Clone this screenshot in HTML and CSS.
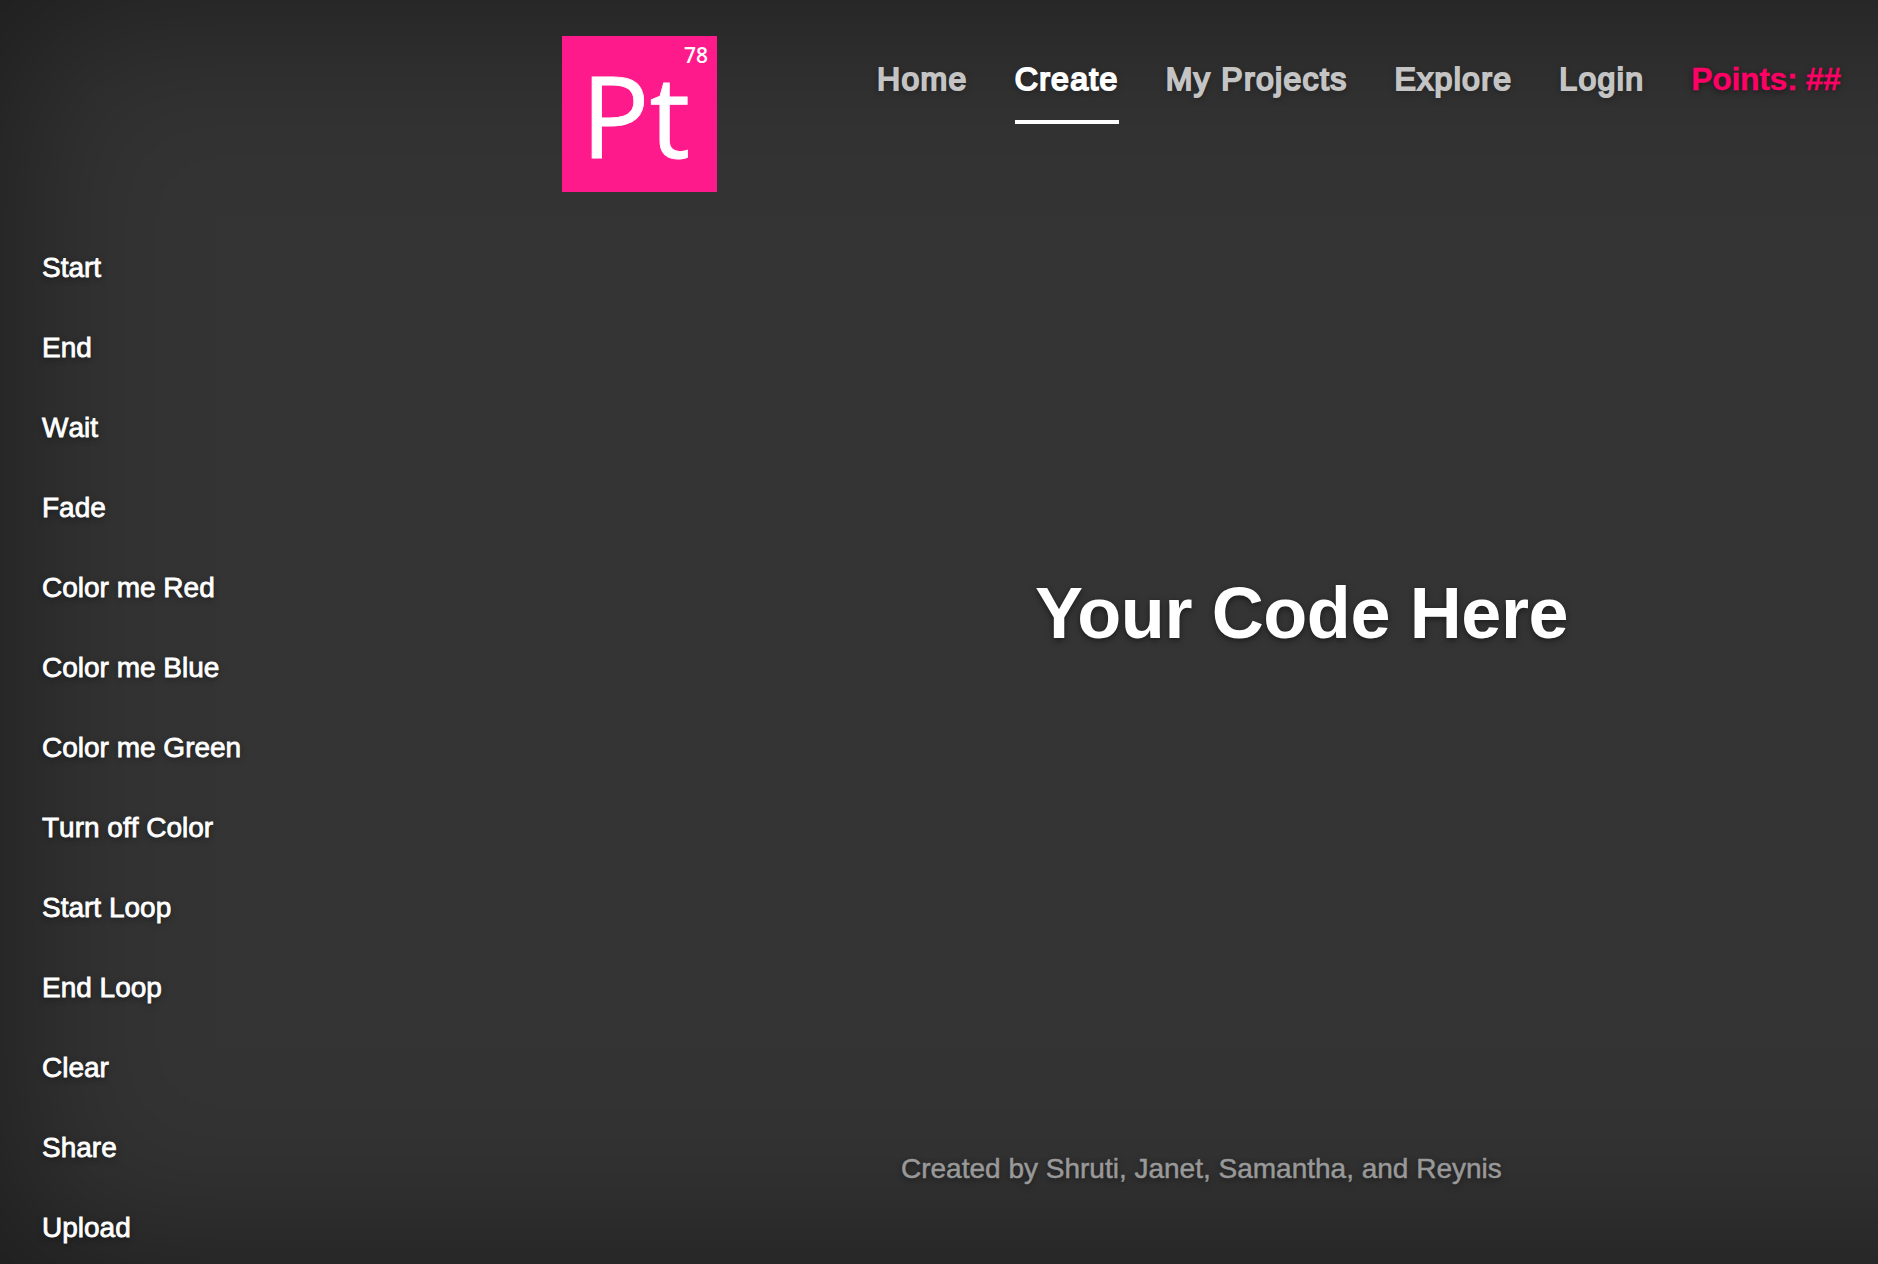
FILE: index.html
```
<!DOCTYPE html>
<html lang="en">

<head>
  <meta charset="UTF-8">
  <meta name="viewport" content="width=device-width, initial-scale=1.0">
  <title>Create</title>
  <link rel="stylesheet" href="styles.css">
</head>

<body>
  <div class="site-wrapper">
    <header class="masthead">
      <div class="logo">
        <span class="number">78</span>
        <span class="symbol">Pt</span>
      </div>
      <nav class="masthead-nav">
        <a href="#">Home</a>
        <a href="#" class="active">Create</a>
        <a href="#">My Projects</a>
        <a href="#">Explore</a>
        <a href="#">Login</a>
        <a href="#" class="points">Points: ##</a>
      </nav>
    </header>

    <div class="content">
      <ul class="blocks">
        <li>Start</li>
        <li>End</li>
        <li>Wait</li>
        <li>Fade</li>
        <li>Color me Red</li>
        <li>Color me Blue</li>
        <li>Color me Green</li>
        <li>Turn off Color</li>
        <li>Start Loop</li>
        <li>End Loop</li>
        <li>Clear</li>
        <li>Share</li>
        <li>Upload</li>
      </ul>

      <main class="workspace">
        <h1>Your Code Here</h1>
        <footer>Created by Shruti, Janet, Samantha, and Reynis</footer>
      </main>
    </div>
  </div>
</body>

</html>
```

FILE: styles.css
```
* {
  box-sizing: border-box;
}

body {
  margin: 0;
  height: 1264px;
  overflow: hidden;
  font-family: "Liberation Sans", Arial, sans-serif;
  font-size: 28px;
  line-height: 40px;
  background-color: #343434;
  color: #fff;
  text-shadow: 0 2px 6px rgba(0, 0, 0, 0.5);
}

/* wider than the window, so the right edge stays unshaded */
.site-wrapper {
  width: 2100px;
  height: 1264px;
  box-shadow: inset 0 0 180px rgba(0, 0, 0, 0.5);
}

.masthead {
  display: flex;
  align-items: flex-start;
  height: 248px;
  padding: 36px 0 0 562px;
}

.logo {
  display: flex;
  flex-direction: column;
  width: 155px;
  height: 156px;
  background-color: #ff1a8c;
  font-family: "Open Sans", "Noto Sans", sans-serif;
  text-shadow: none;
}

.logo .number {
  padding: 5px 9px 0 0;
  font-size: 21px;
  font-weight: 600;
  line-height: 28px;
  text-align: right;
}

.logo .symbol {
  padding-left: 19px;
  font-size: 114px;
  line-height: 89px;
  -webkit-text-stroke: 0.8px;
}

.masthead-nav {
  display: flex;
  gap: 47px;
  margin-left: 160px;
  padding-top: 22px;
}

.masthead-nav a {
  height: 66px;
  border-bottom: 4px solid transparent;
  color: #c4c4c4;
  font-size: 32px;
  line-height: 42px;
  letter-spacing: 1.33px;
  text-decoration: none;
  white-space: nowrap;
  -webkit-text-stroke: 2px;
}

.masthead-nav .active {
  color: #fff;
  border-bottom-color: #fff;
}

.masthead-nav .points {
  color: #ff0066;
  font-weight: bold;
  letter-spacing: -0.35px;
  -webkit-text-stroke: 0.3px;
}

.content {
  display: flex;
}

.blocks {
  display: flex;
  flex-direction: column;
  gap: 40px;
  width: 727px;
  margin: 0;
  padding: 0 0 0 42px;
  list-style: none;
  font-kerning: none;
  -webkit-text-stroke: 0.8px;
}

.workspace {
  width: 1151px;
}

.workspace h1 {
  margin: 0 0 0 308px;
  padding-top: 325px;
  font-size: 72px;
  line-height: 80px;
  letter-spacing: -0.4px;
}

.workspace footer {
  margin: 496px 0 0 174px;
  color: #999;
  -webkit-text-stroke: 0.5px;
}
```
